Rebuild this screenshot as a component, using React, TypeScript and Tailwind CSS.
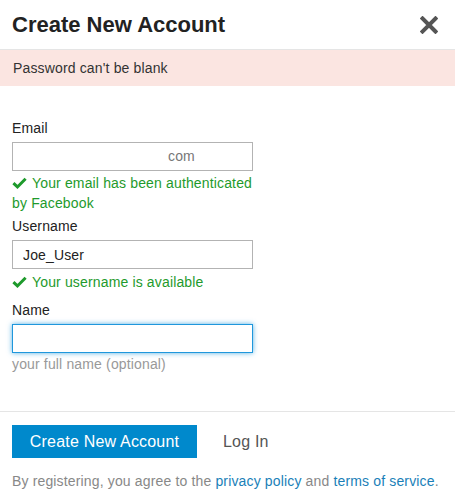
import React from 'react';

const Check = () => (
  <svg viewBox="0 0 16 12" className="mr-[5px] inline-block h-[12px] w-[15px] align-[-1px]" aria-hidden>
    <path d="M1.5 6.2 L5.8 10.2 L14.5 1.5" fill="none" stroke="currentColor" strokeWidth="3.2" />
  </svg>
);

const inputBase =
  'block h-[29px] w-[241px] border bg-white px-[10px] text-[14px] tracking-[0.15px] text-[#222] outline-none';

const App: React.FC = () => {
  return (
    <div className="h-[500px] w-[455px] bg-white font-['Liberation_Sans',Arial,sans-serif] text-[14px] tracking-[0.15px] text-[#222]">
      <header className="flex h-[50px] items-center justify-between border-b border-[#e5e5e5] pl-[12px] pr-[17px]">
        <h1 className="text-[22px] font-bold leading-none tracking-normal text-[#222]">Create New Account</h1>
        <button aria-label="Close" className="text-[#555]">
          <svg viewBox="0 0 18 18" className="h-[18px] w-[18px]">
            <path d="M2.5 2.5 L15.5 15.5 M15.5 2.5 L2.5 15.5" stroke="currentColor" strokeWidth="4" strokeLinecap="square" />
          </svg>
        </button>
      </header>

      <div className="flex h-[36px] items-center bg-[#fbe5e1] px-[13px] text-[14px] text-[#333]">
        Password can't be blank
      </div>

      <form className="px-[12px] pt-[32px]" onSubmit={(e) => e.preventDefault()}>
        <label className="block leading-[20px]">Email</label>
        <div className="mt-[4px] flex h-[29px] w-[241px] items-center border border-[#b3b3b3] pl-[155px] text-[#777]">
          com
        </div>
        <p className="mt-[2px] w-[244px] leading-[20px] text-[#1e9a2c]">
          <Check />
          Your email has been authenticated by Facebook
        </p>

        <label className="mt-[3px] block leading-[20px]">Username</label>
        <input className={`${inputBase} mt-[4px] border-[#b3b3b3]`} defaultValue="Joe_User" />
        <p className="mt-[3px] leading-[20px] text-[#1e9a2c]">
          <Check />
          Your username is available
        </p>

        <label className="mt-[8px] block leading-[20px]">Name</label>
        <input className={`${inputBase} mt-[4px] border-[#1f97dc] shadow-[0_0_5px_rgba(31,151,220,0.75)]`} />
        <p className="mt-[1px] leading-[20px] text-[#999]">your full name (optional)</p>
      </form>

      <div className="mt-[37px] border-t border-[#e5e5e5] px-[12px] pt-[13px]">
        <div className="flex items-center">
          <button className="h-[33px] w-[185px] bg-[#0089cc] text-[16px] tracking-[0.2px] text-white">Create New Account</button>
          <button className="ml-[26px] text-[16px] tracking-[0.2px] text-[#555]">Log In</button>
        </div>
        <p className="mt-[13px] text-[14px] leading-[20px] text-[#888]">
          By registering, you agree to the <a className="text-[#1a7fb8]">privacy policy</a> and{' '}
          <a className="text-[#1a7fb8]">terms of service</a>.
        </p>
      </div>
    </div>
  );
};

export default App;
